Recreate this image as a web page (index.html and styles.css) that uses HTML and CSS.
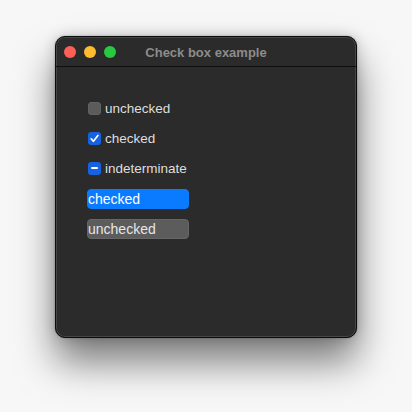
FILE: index.html
```html
<!DOCTYPE html>
<html>
<head>
<meta charset="utf-8">
<link rel="stylesheet" href="styles.css">
</head>
<body>
<div class="desk">
  <div class="window">
    <div class="titlebar">
      <div class="lights">
        <span class="light red"></span>
        <span class="light yellow"></span>
        <span class="light green"></span>
      </div>
      <div class="title">Check box example</div>
    </div>
    <div class="content">
      <div class="row">
        <span class="box off"></span>
        <span class="label">unchecked</span>
      </div>
      <div class="row">
        <span class="box on">
          <svg width="13" height="13" viewBox="0 0 13 13"><path d="M3.2 6.8 L5.4 9.3 L9.9 3.4" fill="none" stroke="#fff" stroke-width="1.7" stroke-linecap="round" stroke-linejoin="round"/></svg>
        </span>
        <span class="label">checked</span>
      </div>
      <div class="row">
        <span class="box on">
          <span class="dash"></span>
        </span>
        <span class="label">indeterminate</span>
      </div>
      <div class="row">
        <span class="toggle active">checked</span>
      </div>
      <div class="row">
        <span class="toggle">unchecked</span>
      </div>
    </div>
  </div>
</div>
</body>
</html>
```

FILE: styles.css
```css
html, body {
  margin: 0;
  padding: 0;
}
body {
  width: 412px;
  height: 412px;
  background: #f7f7f7;
  font-family: "Liberation Sans", Arial, sans-serif;
  overflow: hidden;
}
.desk {
  padding: 36px 0 0 55px;
}
.window {
  width: 300px;
  height: 300px;
  border: 1px solid #0c0c0c;
  border-radius: 10px;
  background: #2b2b2b;
  box-shadow: inset 0 0 0 1px rgba(255,255,255,0.13), 0 24px 38px rgba(0,0,0,0.5), 0 0 14px rgba(0,0,0,0.18), 0 0 2px rgba(0,0,0,0.3);
  display: flex;
  flex-direction: column;
  overflow: hidden;
}
.titlebar {
  height: 28px;
  border-bottom: 1px solid #0e0e0e;
  display: flex;
  align-items: center;
  position: relative;
  flex: none;
  padding-top: 1px;
  box-sizing: content-box;
}
.lights {
  display: flex;
  gap: 8px;
  padding-left: 8px;
}
.light {
  width: 12px;
  height: 12px;
  border-radius: 50%;
  display: block;
}
.red { background: #fe5f57; }
.yellow { background: #febc2e; }
.green { background: #28c840; }
.title {
  position: absolute;
  left: 0;
  right: 0;
  top: 1px;
  bottom: 0;
  display: flex;
  align-items: center;
  justify-content: center;
  color: #8c8c8c;
  font-weight: bold;
  font-size: 13px;
}
.content {
  padding: 26px 0 0 32px;
  display: flex;
  flex-direction: column;
}
.row {
  height: 30px;
  display: flex;
  align-items: center;
  gap: 4px;
}
.box {
  width: 13px;
  height: 13px;
  border-radius: 3px;
  display: flex;
  align-items: center;
  justify-content: center;
  box-sizing: border-box;
}
.box.off {
  background: #5b5b5b;
  border: 1px solid #626262;
}
.box.on {
  background: #1662e0;
}
.dash {
  width: 7px;
  height: 2px;
  background: #fff;
  border-radius: 1px;
}
.label {
  color: #dedede;
  font-size: 13.5px;
}
.toggle {
  width: 102px;
  height: 20px;
  margin-left: -1px;
  margin-top: 2px;
  border-radius: 4px;
  box-sizing: border-box;
  background: #5c5c5c;
  border: 1px solid #666;
  color: #e6e6e6;
  font-size: 14px;
  line-height: 18px;
  padding-left: 0;
}
.toggle.active {
  background: #0a7bff;
  border-color: #0a7bff;
  color: #fff;
}
```
